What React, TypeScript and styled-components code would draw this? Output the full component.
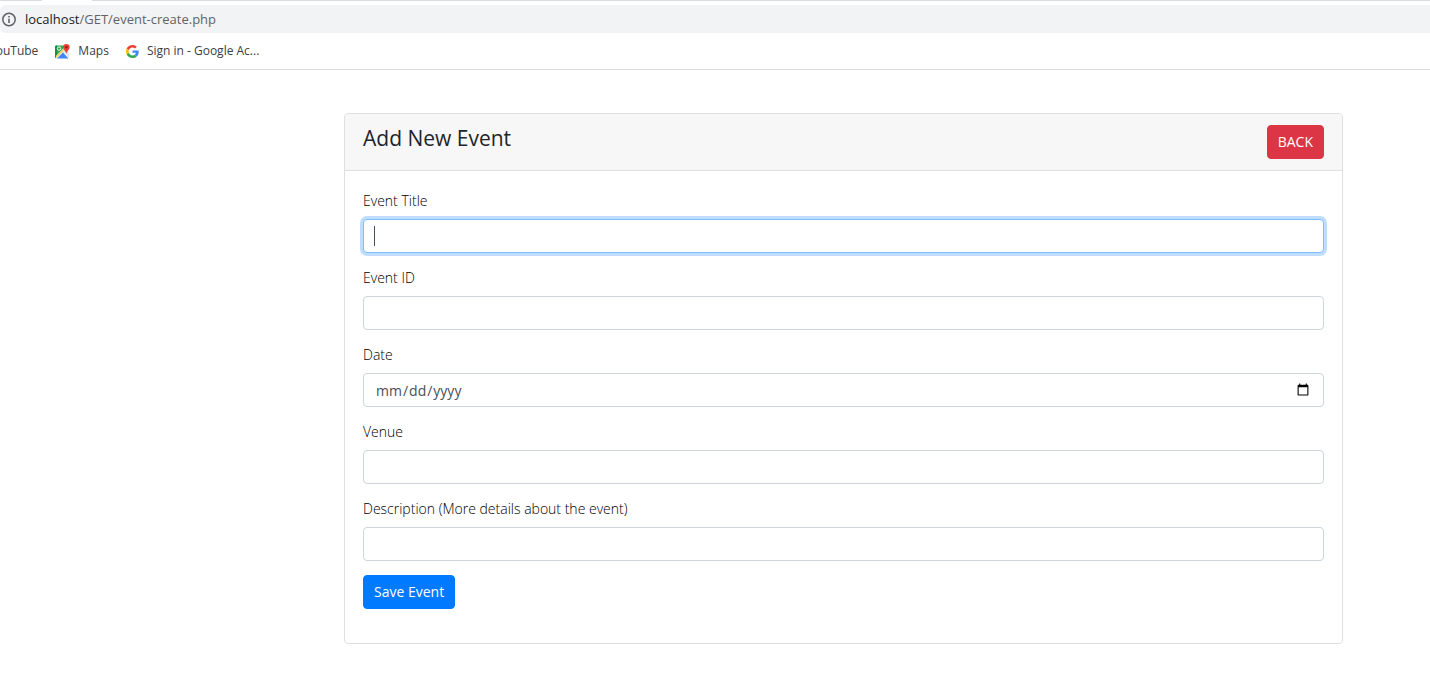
import React from "react";
import styled, { createGlobalStyle } from "styled-components";

const GlobalStyle = createGlobalStyle`
  *, *::before, *::after { box-sizing: border-box; }
  body {
    margin: 0;
    background: #fff;
    color: #212529;
    font-family: "Open Sans", "Noto Sans", sans-serif;
    font-size: 14px;
  }
`;

const BrowserBar = styled.header`
  border-bottom: 1px solid #dadce0;
  overflow: hidden;
`;

const TabStrip = styled.div`
  display: grid;
  grid-template-columns: 42px 1fr;
  column-gap: 50px;
  height: 1px;
  &::before, &::after { content: ""; background: #dadce0; }
`;

const AddressBar = styled.div`
  display: flex;
  align-items: center;
  gap: 8px;
  height: 28px;
  margin-top: 4px;
  padding-left: 2px;
  border-radius: 6px 0 0 6px;
  background: #f1f3f4;
  color: #5f6368;
  font-size: 13px;
  svg { flex: none; }
`;

const Address = styled.span`
  line-height: 20px;
  b { font-weight: 400; color: #202124; }
`;

const Bookmarks = styled.nav`
  display: flex;
  align-items: center;
  gap: 17px;
  height: 36px;
  margin-left: -11px;
`;

const Bookmark = styled.a`
  display: flex;
  align-items: center;
  gap: 8px;
  color: #3c4043;
  font-size: 12px;
  line-height: 16px;
  text-decoration: none;
  white-space: nowrap;
`;

const Page = styled.main`
  padding: 43px 87px 40px 344px;
`;

const Card = styled.section`
  border: 1px solid #dfdfdf;
  border-radius: 4px;
  overflow: hidden;
`;

const CardHeader = styled.div`
  display: flex;
  justify-content: space-between;
  align-items: flex-start;
  padding: 11px 18px;
  border-bottom: 1px solid #dfdfdf;
  background: #f7f7f7;
`;

const Title = styled.h1`
  margin: 0;
  font-size: 21px;
  font-weight: 500;
  line-height: 26px;
`;

const Button = styled.button<{ $color: string }>`
  height: 34px;
  padding: 0 10px;
  border: 1px solid ${(p) => p.$color};
  border-radius: 4px;
  background: ${(p) => p.$color};
  color: #fff;
  font: inherit;
  line-height: 22px;
`;

const Form = styled.form`
  padding: 19px 18px 34px;
`;

const Field = styled.div`
  display: flex;
  flex-direction: column;
  gap: 7px;
  margin-bottom: 14px;
`;

const Label = styled.label`
  color: #000;
  font-weight: 300;
  line-height: 22px;
  align-self: flex-start;
`;

const InputWrap = styled.div`
  position: relative;
  display: flex;
`;

const Input = styled.input<{ $active?: boolean }>`
  width: 100%;
  height: 34px;
  padding: 0 11px;
  border: 1px solid ${(p) => (p.$active ? "#80bdff" : "#ced4da")};
  border-radius: 4px;
  outline: none;
  background: #fff;
  color: #495057;
  font: inherit;
  box-shadow: ${(p) => (p.$active ? "0 0 0 3px #bfdeff" : "none")};
`;

const Caret = styled.span`
  position: absolute;
  top: 7px;
  left: 11px;
  width: 1px;
  height: 20px;
  background: #495057;
`;

const InfoIcon = () => (
  <svg width="15" height="15" viewBox="0 0 15 15" fill="none" stroke="#5f6368" aria-hidden="true">
    <circle cx="7" cy="7.5" r="6.2" strokeWidth="1.5" />
    <path d="M7 6.8v4.2M7 4v1.6" strokeWidth="1.6" />
  </svg>
);

const MapsIcon = () => (
  <svg width="15" height="15" viewBox="0 0 15 15" aria-hidden="true">
    <path d="M1 1.5h10L1 13z" fill="#34a853" />
    <path d="M0 2.5a1 1 0 0 1 1-1h1V14H1a1 1 0 0 1-1-1z" fill="#188f49" />
    <path d="M1 12 9.5 3.5l4.5 5V14L9.5 8.8 4 14.5H1z" fill="#dce5ed" />
    <path d="M2 14.5 8 8.5l5.5 6z" fill="#4285f4" />
    <path d="M1 12 8.5 4.5l1 1L1 14z" fill="#fbd04b" />
    <circle cx="4" cy="4.6" r="1.7" fill="none" stroke="#fff" strokeWidth=".9" />
    <path d="M11.4 0a3.3 3.3 0 0 1 3.3 3.3c0 2.4-2.5 3.4-3.3 6.5-.8-3.1-3.3-4.1-3.3-6.5A3.3 3.3 0 0 1 11.4 0z" fill="#ea4335" />
    <circle cx="11.4" cy="3.2" r="1.2" fill="#8c1f17" />
  </svg>
);

const GoogleIcon = () => (
  <svg width="13" height="13" viewBox="0 0 48 48" aria-hidden="true">
    <path fill="#ea4335" d="M24 9.5c3.5 0 6.7 1.2 9.2 3.6l6.9-6.9C35.9 2.4 30.5 0 24 0 14.6 0 6.5 5.4 2.6 13.2l8 6.2C12.4 13.7 17.7 9.5 24 9.5z" />
    <path fill="#4285f4" d="M47 24.6c0-1.6-.2-3.1-.4-4.6H24v9h12.9c-.6 3-2.2 5.5-4.7 7.2l7.7 6C44.4 38 47 31.8 47 24.6z" />
    <path fill="#fbbc05" d="M10.5 28.6a14.5 14.5 0 0 1 0-9.2l-8-6.2a24 24 0 0 0 0 21.6z" />
    <path fill="#34a853" d="M24 48c6.5 0 11.9-2.1 15.9-5.8l-7.7-6c-2.2 1.4-4.9 2.3-8.2 2.3-6.3 0-11.6-4.2-13.5-9.9l-8 6.2C6.5 42.6 14.6 48 24 48z" />
  </svg>
);

const fields = [
  { id: "title", label: "Event Title", type: "text", active: true },
  { id: "event-id", label: "Event ID", type: "text" },
  { id: "date", label: "Date", type: "date" },
  { id: "venue", label: "Venue", type: "text" },
  { id: "description", label: "Description (More details about the event)", type: "text" },
];

export default function App() {
  return (
    <>
      <GlobalStyle />
      <BrowserBar>
        <TabStrip />
        <AddressBar>
          <InfoIcon />
          <Address><b>localhost</b>/GET/event-create.php</Address>
        </AddressBar>
        <Bookmarks>
          <Bookmark href="#youtube">YouTube</Bookmark>
          <Bookmark href="#maps"><MapsIcon />Maps</Bookmark>
          <Bookmark href="#google"><GoogleIcon />Sign in - Google Ac...</Bookmark>
        </Bookmarks>
      </BrowserBar>
      <Page>
        <Card>
          <CardHeader>
            <Title>Add New Event</Title>
            <Button type="button" $color="#dc3545">BACK</Button>
          </CardHeader>
          <Form>
            {fields.map((f) => (
              <Field key={f.id}>
                <Label htmlFor={f.id}>{f.label}</Label>
                <InputWrap>
                  <Input id={f.id} type={f.type} $active={f.active} />
                  {f.active && <Caret />}
                </InputWrap>
              </Field>
            ))}
            <Button type="submit" $color="#007bff">Save Event</Button>
          </Form>
        </Card>
      </Page>
    </>
  );
}
